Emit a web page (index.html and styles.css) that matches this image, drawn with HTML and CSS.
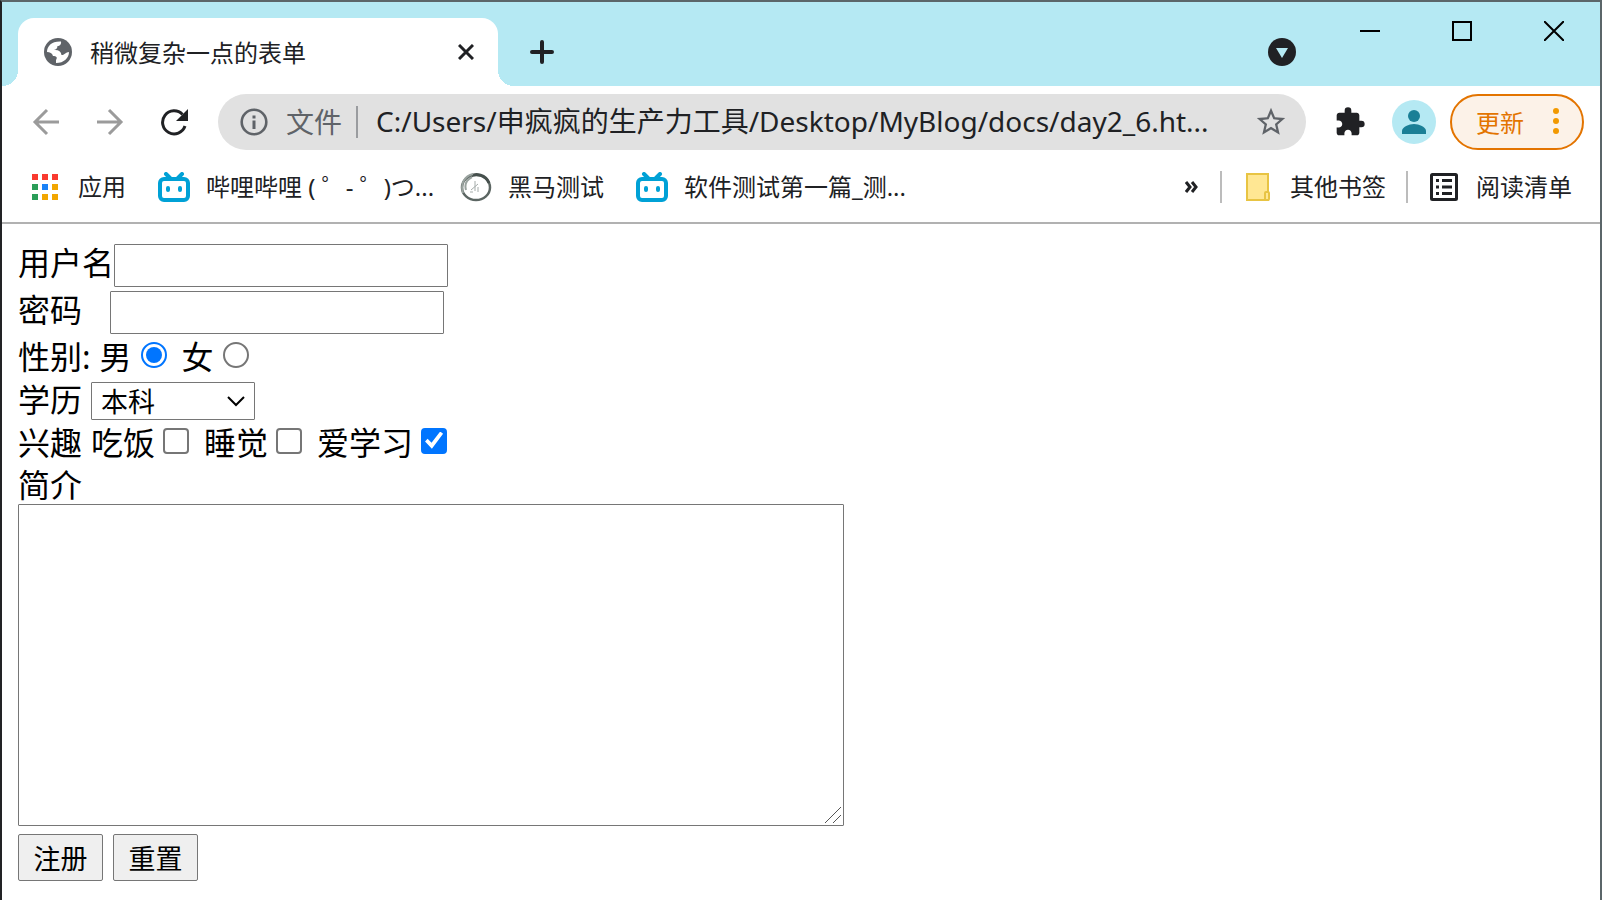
FILE: index.html
```
<!DOCTYPE html>
<html lang="zh-CN">
<head>
    <meta charset="UTF-8">
    <meta name="viewport" content="width=device-width, initial-scale=1.0">
    <title>稍微复杂一点的表单</title>
    <link rel="stylesheet" href="styles.css">
</head>
<body>
    <div class="window">
        <!-- 标签栏 -->
        <div class="titlebar">
            <div class="tab">
                <svg class="tab-icon" width="28" height="28" viewBox="0 0 28 28"><circle cx="14" cy="14" r="14" fill="#5f6368"/><path d="M3 14C3 8 8 3 17 3.500 17.500 6 16 8 13.500 8 13.500 10.500 12 11.500 10 12 14 11.500 17 13 17.500 17 20.500 17.500 21.500 14 25 14 25 20 20 25 12 25V22C14 19 12 18 9 18 8 15 6 14 3 14z" fill="#fff"/></svg>
                <span class="tab-title">稍微复杂一点的表单</span>
                <button class="icon-btn" aria-label="关闭标签页">
                    <svg width="16" height="16" viewBox="0 0 16 16" stroke="#202124" stroke-width="3"><path d="M1 1l14 14M15 1L1 15"/></svg>
                </button>
            </div>
            <button class="icon-btn new-tab" aria-label="新标签页">
                <svg width="24" height="24" viewBox="0 0 24 24" stroke="#202124" stroke-width="4" stroke-linecap="round"><path d="M12 2v20M2 12h20"/></svg>
            </button>
            <button class="icon-btn tab-search" aria-label="搜索标签页">
                <svg width="28" height="28" viewBox="0 0 28 28"><circle cx="14" cy="14" r="14" fill="#202124"/><path d="M8 10h12l-6 10z" fill="#b5e9f3"/></svg>
            </button>
            <div class="window-controls">
                <button class="icon-btn" aria-label="最小化">
                    <svg width="20" height="20" viewBox="0 0 20 20" stroke="#000" stroke-width="2"><path d="M0 10h20"/></svg>
                </button>
                <button class="icon-btn" aria-label="最大化">
                    <svg width="20" height="20" viewBox="0 0 20 20" stroke="#000" stroke-width="2" fill="none"><path d="M1 1h18v18H1z"/></svg>
                </button>
                <button class="icon-btn" aria-label="关闭">
                    <svg width="20" height="20" viewBox="0 0 20 20" stroke="#000" stroke-width="2"><path d="M0 0l20 20M20 0L0 20"/></svg>
                </button>
            </div>
        </div>

        <!-- 工具栏 -->
        <div class="toolbar">
            <div class="nav-buttons">
                <button class="icon-btn" aria-label="后退">
                    <svg width="28" height="28" viewBox="0 0 28 28" stroke="#9b9b9b" stroke-width="3" fill="none"><path d="M27 14H3M15 2L3 14l12 12"/></svg>
                </button>
                <button class="icon-btn" aria-label="前进">
                    <svg width="28" height="28" viewBox="0 0 28 28" stroke="#9b9b9b" stroke-width="3" fill="none"><path d="M1 14h24M13 2l12 12-12 12"/></svg>
                </button>
                <button class="icon-btn" aria-label="重新加载">
                    <svg width="28" height="28" viewBox="0 0 28 28"><path d="M22.500 6.500A11.500 11.500 0 1 0 25 18" fill="none" stroke="#202124" stroke-width="3"/><path d="M28 1v12H16z" fill="#202124"/></svg>
                </button>
            </div>
            <div class="omnibox">
                <svg width="28" height="28" viewBox="0 0 28 28"><circle cx="14" cy="14" r="12.300" fill="none" stroke="#5f6368" stroke-width="2.600"/><path d="M12.500 7.500h3v3h-3zM12.500 12.500h3v8.500h-3z" fill="#5f6368"/></svg>
                <label class="scheme" for="url">文件</label>
                <input class="url" type="text" id="url" value="C:/Users/申疯疯的生产力工具/Desktop/MyBlog/docs/day2_6.ht...">
                <button class="icon-btn" aria-label="添加书签">
                    <svg width="34" height="34" viewBox="0 0 24 24" fill="#5f6368"><path d="M22 9.240l-7.190-.62L12 2 9.190 8.630 2 9.240l5.460 4.730L5.820 21 12 17.270 18.180 21l-1.630-7.030L22 9.240zM12 15.400l-3.760 2.270 1-4.280-3.320-2.880 4.380-.38L12 6.100l1.710 4.040 4.380.38-3.320 2.880 1 4.280L12 15.400z"/></svg>
                </button>
            </div>
            <button class="icon-btn extensions" aria-label="扩展程序">
                <svg width="32" height="32" viewBox="0 0 24 24" fill="#202124"><path d="M20.500 11H19V7c0-1.100-.9-2-2-2h-4V3.500a2.500 2.500 0 0 0-5 0V5H4c-1.100 0-1.990.9-1.990 2v3.800H3.500c1.490 0 2.700 1.210 2.700 2.700s-1.210 2.700-2.700 2.700H2V20c0 1.100.9 2 2 2h3.800v-1.500c0-1.490 1.210-2.700 2.700-2.700s2.700 1.210 2.700 2.700V22H17c1.100 0 2-.9 2-2v-4h1.500a2.500 2.500 0 0 0 0-5z"/></svg>
            </button>
            <button class="icon-btn avatar" aria-label="个人资料">
                <svg width="44" height="44" viewBox="0 0 44 44" fill="#1a7f96"><circle cx="22" cy="22" r="22" fill="#b5e9f3"/><circle cx="22" cy="16" r="6"/><path d="M10 34v-3c0-4 7-7 12-7s12 3 12 7v3z"/></svg>
            </button>
            <button class="update-btn">
                更新
                <svg width="6" height="28" viewBox="0 0 6 28" fill="#f29900"><circle cx="3" cy="4" r="3"/><circle cx="3" cy="14" r="3"/><circle cx="3" cy="24" r="3"/></svg>
            </button>
        </div>

        <!-- 书签栏 -->
        <div class="bookmarks">
            <a class="bookmark apps" href="#">
                <svg width="26" height="26" viewBox="0 0 26 26"><path d="M0 0h6v6H0zM10 0h6v6h-6zM20 0h6v6h-6z" fill="#f93a2f"/><path d="M0 10h6v6H0zM0 20h6v6H0z" fill="#2a9d58"/><path d="M10 10h6v6h-6z" fill="#1a82f7"/><path d="M20 10h6v6h-6zM10 20h6v6h-6zM20 20h6v6h-6z" fill="#f2a600"/></svg>
                应用
            </a>
            <a class="bookmark" href="#">
                <svg width="32" height="30" viewBox="0 0 32 30" fill="none" stroke="#00a1d6" stroke-width="4" stroke-linecap="round"><path d="M8 2l4 4M24 2l-4 4"/><rect x="2" y="7" width="28" height="21" rx="4"/><path d="M10 16v2M22 16v2"/></svg>
                <span class="bookmark-title">哔哩哔哩 ( ゜- ゜)つ...</span>
            </a>
            <a class="bookmark" href="#">
                <svg width="32" height="30" viewBox="0 0 32 30" fill="none" stroke="#5c6663"><ellipse cx="16" cy="15.500" rx="14" ry="12.500" stroke-width="2.500"/><path d="M9 5C16 0 26 3 29 11" stroke="#46504d" stroke-width="3"/><path d="M3 21C0 11 5 4 13 2M6 18C4 11 8 7 12 5" stroke="#9aa39f" stroke-width="2"/><path d="M15 9v10M11 18l7-6M18 15v5M10 20h3" stroke="#a5acaa"/></svg>
                <span class="bookmark-title">黑马测试</span>
            </a>
            <a class="bookmark" href="#">
                <svg width="32" height="30" viewBox="0 0 32 30" fill="none" stroke="#00a1d6" stroke-width="4" stroke-linecap="round"><path d="M8 2l4 4M24 2l-4 4"/><rect x="2" y="7" width="28" height="21" rx="4"/><path d="M10 16v2M22 16v2"/></svg>
                <span class="bookmark-title">软件测试第一篇_测...</span>
            </a>
            <button class="icon-btn more" aria-label="更多书签">
                <svg width="13" height="12" viewBox="0 0 13 12" fill="none" stroke="#202124" stroke-width="3"><path d="M1 1l4 5-4 5M7 1l4 5-4 5"/></svg>
            </button>
            <a class="bookmark side" href="#">
                <svg width="26" height="28" viewBox="0 0 26 28" fill="#ffe793" stroke="#e8c443" stroke-width="2"><path d="M1 1h21v26H1z"/><rect x="19" y="19" width="4" height="8" rx="1"/></svg>
                其他书签
            </a>
            <a class="bookmark side" href="#">
                <svg width="28" height="28" viewBox="0 0 28 28"><rect x="1.500" y="1.500" width="25" height="25" rx="1" fill="none" stroke="#202124" stroke-width="3"/><path d="M6 6h3v3H6zM12 6h10v3H12zM6 12.500h3v3H6zM12 12.500h10v3H12zM6 19h3v3H6zM12 19h10v3H12z" fill="#202124"/></svg>
                阅读清单
            </a>
        </div>

        <!-- 表单 -->
        <form class="form">
            <div class="row field">
                <label for="username">用户名</label>
                <input class="text-input" type="text" id="username">
            </div>
            <div class="row field">
                <label class="password-label" for="password">密码</label>
                <input class="text-input" type="password" id="password">
            </div>
            <div class="row options">
                <span>性别:</span>
                <label>男<input class="radio" type="radio" name="sex" checked></label>
                <label>女<input class="radio" type="radio" name="sex"></label>
            </div>
            <div class="row options">
                <label for="edu">学历</label>
                <div class="select-wrap">
                    <select class="select" id="edu">
                        <option>本科</option>
                        <option>专科</option>
                        <option>硕士</option>
                    </select>
                    <svg class="arrow" width="18" height="12" viewBox="0 0 18 12" fill="none" stroke="#000" stroke-width="2"><path d="M1 2l8 8 8-8"/></svg>
                </div>
            </div>
            <div class="row options">
                <span>兴趣</span>
                <label>吃饭<input class="checkbox" type="checkbox"></label>
                <label>睡觉<input class="checkbox" type="checkbox"></label>
                <label>爱学习<input class="checkbox" type="checkbox" checked></label>
            </div>
            <label class="intro-label" for="intro">简介</label>
            <div class="textarea-wrap">
                <textarea class="textarea" id="intro"></textarea>
                <svg class="grip" width="18" height="18" viewBox="0 0 18 18" stroke="#555"><path d="M1 17L17 1M9 17l8-8"/></svg>
            </div>
            <div class="buttons">
                <button class="btn" type="submit">注册</button>
                <button class="btn" type="reset">重置</button>
            </div>
        </form>
    </div>
</body>
</html>
```
FILE: styles.css
```
* {
    box-sizing: border-box;
}

body {
    margin: 0;
    font-family: "Noto Sans", "Noto Sans CJK SC", sans-serif;
    font-size: 24px;
    color: #202124;
    background: white;
}

svg {
    display: block;
    flex-shrink: 0;
}

.window {
    min-height: 100vh;
    border: 2px solid #5b6669;
    border-left-color: #222325;
    border-bottom: none;
}

.icon-btn {
    padding: 0;
    border: none;
    background: none;
    cursor: pointer;
}

/* 标签栏 */
.titlebar {
    display: flex;
    align-items: flex-end;
    height: 84px;
    padding-left: 16px;
    background: #b5e9f3;
}

.tab {
    position: relative;
    display: flex;
    align-items: center;
    width: 480px;
    height: 68px;
    padding: 0 24px 0 26px;
    border-radius: 16px 16px 0 0;
    background: white;
}

/* 标签底部的反向圆角 */
.tab::before,
.tab::after {
    content: "";
    position: absolute;
    bottom: 0;
    width: 16px;
    height: 16px;
}

.tab::before {
    left: -16px;
    background: radial-gradient(circle at 0 0, transparent 16px, white 16px);
}

.tab::after {
    right: -16px;
    background: radial-gradient(circle at 100% 0, transparent 16px, white 16px);
}

.tab-icon {
    margin-right: 18px;
}

.tab-title {
    flex: 1;
    padding-bottom: 2px;
}

.new-tab {
    margin: 0 auto 22px 32px;
}

.tab-search {
    margin-bottom: 20px;
}

.window-controls {
    display: flex;
    align-self: flex-start;
    gap: 72px;
    padding: 19px 36px 0 64px;
}

/* 工具栏 */
.toolbar {
    display: flex;
    align-items: center;
    height: 72px;
    padding: 0 16px 0 30px;
}

.nav-buttons {
    display: flex;
    gap: 36px;
    margin-right: 30px;
}

.omnibox {
    display: flex;
    flex: 1;
    align-items: center;
    height: 56px;
    padding: 0 18px 0 22px;
    border-radius: 28px;
    background: #e1e1e1;
    font-size: 28px;
}

.scheme {
    margin-left: 18px;
    padding-right: 14px;
    border-right: 2px solid #9a9c9f;
    line-height: 32px;
    color: #5f6368;
}

.url {
    flex: 1;
    min-width: 0;
    padding: 0 0 4px 18px;
    border: none;
    outline: none;
    background: none;
    color: #202124;
    font-family: inherit;
    font-size: 28px;
}

.extensions {
    margin: 0 26px 0 28px;
}

.update-btn {
    display: flex;
    align-items: center;
    gap: 29px;
    height: 56px;
    margin-left: 14px;
    padding: 0 23px 2px 24px;
    border: 2px solid #e37400;
    border-radius: 28px;
    background: #fcf2e8;
    color: #e37400;
    font-family: inherit;
    font-size: 24px;
}

/* 书签栏 */
.bookmarks {
    display: flex;
    align-items: center;
    height: 66px;
    padding: 0 28px 6px 30px;
    border-bottom: 2px solid #b1b1b1;
}

.bookmark {
    display: flex;
    align-items: center;
    gap: 16px;
    margin-right: 32px;
    line-height: 32px;
    color: #202124;
    text-decoration: none;
    white-space: nowrap;
}

.bookmark-title {
    max-width: 222px;
}

.apps {
    gap: 20px;
}

.more {
    margin: 0 22px 0 auto;
}

.side {
    gap: 18px;
    margin-right: 20px;
    padding-left: 24px;
    border-left: 2px solid #bcbcbc;
}

.side:last-child {
    margin-right: 0;
    padding-left: 22px;
}

/* 表单 */
.form {
    padding: 20px 16px;
    color: black;
    font-size: 32px;
}

.row {
    display: flex;
    align-items: center;
    height: 43px;
    line-height: 37px;
}

.field {
    margin-bottom: 4px;
}

.field label {
    padding-bottom: 6px;
}

.field + .options {
    margin-top: -2px;
}

.options {
    gap: 9px;
    padding-bottom: 3px;
}

.options label {
    display: flex;
    align-items: center;
}

.text-input {
    width: 334px;
    height: 43px;
    padding: 2px 4px;
    border: 1px solid #767676;
    border-radius: 1px;
    font-size: 26px;
}

.password-label {
    margin-right: 28px;
}

.radio,
.checkbox {
    display: grid;
    place-items: center;
    width: 26px;
    height: 26px;
    margin: 0 6px 3px 9px;
    border: 2px solid #767676;
    border-radius: 50%;
    appearance: none;
    background: white;
}

.checkbox {
    margin-left: 8px;
    border-radius: 4px;
}

.radio:checked {
    border-color: #0075ff;
}

.radio:checked::before {
    content: "";
    width: 16px;
    height: 16px;
    border-radius: 50%;
    background: #0075ff;
}

.checkbox:checked {
    border-color: #0075ff;
    background: #0075ff;
}

.checkbox:checked::before {
    content: "";
    width: 18px;
    height: 18px;
    background: white;
    clip-path: polygon(0 55%, 14% 40%, 36% 62%, 84% 0, 100% 12%, 38% 96%);
}

.select-wrap {
    position: relative;
    margin-top: 3px;
}

.select {
    display: block;
    width: 164px;
    height: 38px;
    padding: 0 9px;
    border: 1px solid #767676;
    border-radius: 1px;
    appearance: none;
    background: white;
    color: black;
    font-family: inherit;
    font-size: 27px;
}

.arrow {
    position: absolute;
    top: 13px;
    right: 10px;
    pointer-events: none;
}

.intro-label {
    display: block;
    line-height: 39px;
}

.textarea-wrap {
    position: relative;
    width: 826px;
    max-width: 100%;
}

.textarea {
    display: block;
    width: 100%;
    height: 322px;
    padding: 4px;
    border: 1px solid #767676;
    border-radius: 1px;
    resize: none;
    font-size: 26px;
}

.grip {
    position: absolute;
    right: 2px;
    bottom: 2px;
    pointer-events: none;
}

.buttons {
    display: flex;
    gap: 10px;
    margin-top: 8px;
}

.btn {
    width: 85px;
    height: 47px;
    padding: 0;
    border: 1px solid #767676;
    border-radius: 2px;
    background: #efefef;
    color: black;
    font-family: inherit;
    font-size: 27px;
}
```
